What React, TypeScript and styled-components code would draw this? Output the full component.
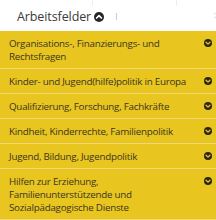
import React from "react";
import styled, { createGlobalStyle } from "styled-components";

const GlobalStyle = createGlobalStyle`
  html, body {
    margin: 0;
    padding: 0;
    background: #ffffff;
    font-family: "Open Sans", "DejaVu Sans", sans-serif;
  }
`;

const items = [
  "Organisations-, Finanzierungs- und Rechtsfragen",
  "Kinder- und Jugend(hilfe)politik in Europa",
  "Qualifizierung, Forschung, Fachkräfte",
  "Kindheit, Kinderrechte, Familienpolitik",
  "Jugend, Bildung, Jugendpolitik",
  "Hilfen zur Erziehung, Familienunterstützende und Sozialpädagogische Dienste",
];

const ChevronCircle = ({ up, fill, stroke }: { up?: boolean; fill: string; stroke: string }) => (
  <svg width="100%" height="100%" viewBox="0 0 10 10">
    <circle cx="5" cy="5" r="5" fill={fill} />
    <path
      d={up ? "M2.6 6 L5 3.6 L7.4 6" : "M2.6 4 L5 6.4 L7.4 4"}
      fill="none"
      stroke={stroke}
      strokeWidth="1.7"
      strokeLinecap="round"
      strokeLinejoin="round"
    />
  </svg>
);

const App = () => {
  return (
    <Page>
      <GlobalStyle />
      <NavBar>
        <Tick style={{ left: 92 }} />
        <Tick style={{ left: 176 }} />
        <NavItem>
          Arbeitsfelder
          <NavIcon>
            <ChevronCircle up fill="#262626" stroke="#ffffff" />
          </NavIcon>
          <Caret />
        </NavItem>
        <Divider />
        <Colon>:</Colon>
      </NavBar>
      <Menu>
        {items.map((label) => (
          <Row key={label}>
            <Label>{label}</Label>
            <RowIcon>
              <ChevronCircle fill="#2b2611" stroke="#e9c520" />
            </RowIcon>
          </Row>
        ))}
      </Menu>
    </Page>
  );
};

const Page = styled.div`
  width: 216px;
  height: 220px;
  overflow: hidden;
`;

const NavBar = styled.div`
  position: relative;
  height: 31px;
  display: flex;
  align-items: center;
  padding-left: 17px;
  box-sizing: border-box;
`;

const Tick = styled.span`
  position: absolute;
  top: 0;
  width: 1px;
  height: 6px;
  background: #eeeeee;
`;

const NavItem = styled.div`
  position: relative;
  display: flex;
  align-items: center;
  gap: 3px;
  font-size: 12.5px;
  color: #3a3a3a;
  letter-spacing: -0.1px;
  margin-top: 1px;
`;

const NavIcon = styled.span`
  display: inline-flex;
  width: 10px;
  height: 10px;
  margin-top: 1px;
`;

const Caret = styled.span`
  position: absolute;
  left: 26px;
  bottom: -14px;
  width: 0;
  height: 0;
  border-left: 5px solid transparent;
  border-right: 5px solid transparent;
  border-bottom: 6px solid #e9c520;
`;

const Divider = styled.span`
  width: 1px;
  height: 7px;
  background: #cccccc;
  margin-left: 12px;
  margin-top: 2px;
`;

const Colon = styled.span`
  position: absolute;
  right: 0;
  top: 8px;
  font-size: 9px;
  color: #bbbbbb;
`;

const Menu = styled.div`
  background: #e9c520;
  display: flex;
  flex-direction: column;
`;

const Row = styled.div`
  display: flex;
  align-items: flex-start;
  justify-content: space-between;
  padding: 6px 4px 5px 9px;
  border-bottom: 1px solid #f1d873;
`;

const Label = styled.span`
  font-size: 9.8px;
  letter-spacing: -0.25px;
  line-height: 13px;
  color: #3b3520;
  max-width: 186px;
`;

const RowIcon = styled.span`
  display: inline-flex;
  width: 8px;
  height: 8px;
  margin-top: 2px;
  flex-shrink: 0;
`;

export default App;
